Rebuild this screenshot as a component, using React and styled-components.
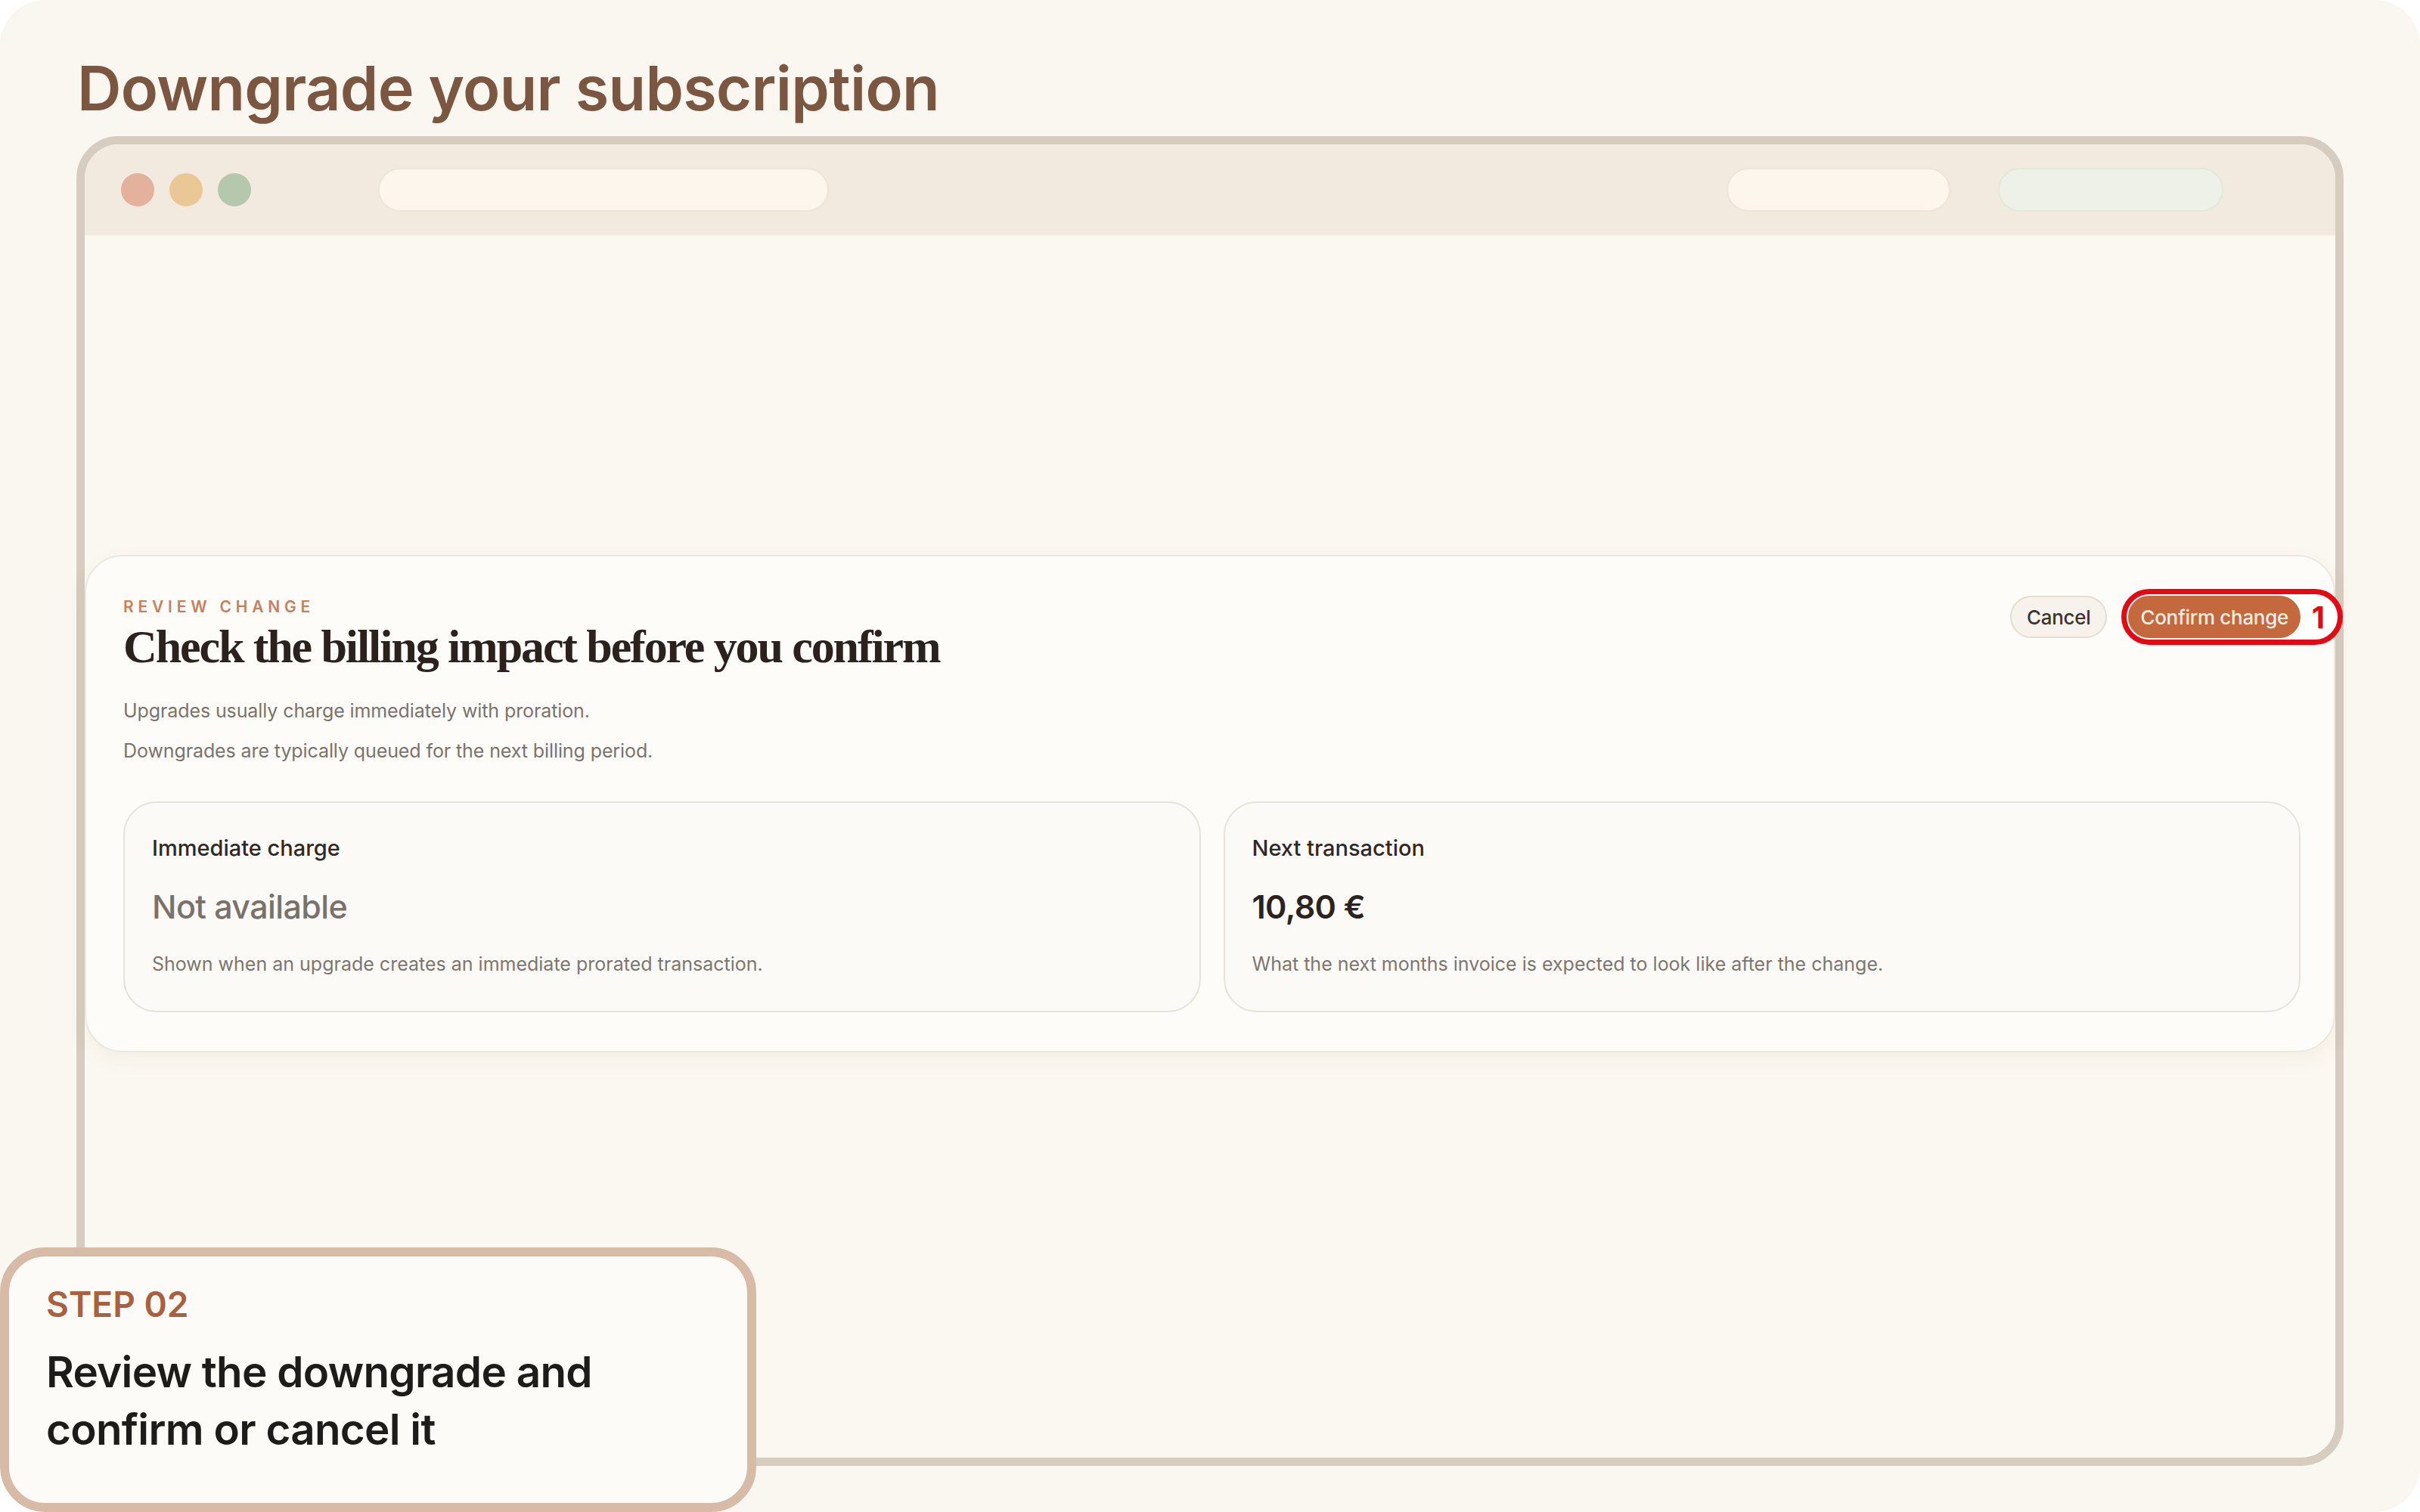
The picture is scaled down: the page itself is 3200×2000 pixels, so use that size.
import styled, { createGlobalStyle } from 'styled-components';

const GlobalStyle = createGlobalStyle`
  html, body {
    margin: 0;
    padding: 0;
    background: #ffffff;
  }
  body {
    font-family: Inter, "Noto Sans", "Liberation Sans", sans-serif;
  }
  * {
    box-sizing: border-box;
  }
`

const Page = styled.div`
  position: relative;
  width: 3200px;
  height: 2000px;
  border-radius: 60px;
  background: #faf7f0;
  overflow: hidden;
  padding: 77px 101px 0 101px;
`

const PageTitle = styled.h1`
  margin: 0 0 0 1px;
  font-size: 81px;
  line-height: 81px;
  font-weight: 600;
  letter-spacing: -0.7px;
  color: #7b5741;
`

const BrowserFrame = styled.div`
  margin-top: 22px;
  height: 1759px;
  border: 11px solid #d6ccbf;
  border-radius: 56px;
  background: #fbf8f1;
  display: flex;
  flex-direction: column;
`

const Toolbar = styled.div`
  flex: none;
  height: 120px;
  border-radius: 45px 45px 0 0;
  background: #f3eadf;
  display: flex;
  align-items: center;
  padding: 0 148px 0 48px;
`

const Dots = styled.div`
  display: flex;
  gap: 20px;
`

const Dot = styled.span`
  width: 44px;
  height: 44px;
  border-radius: 50%;
  background: ${p => p.color};
`

const Pill = styled.div`
  width: ${p => p.width}px;
  height: 58px;
  border-radius: 29px;
  background: ${p => (p.green ? '#eef1e7' : '#fdf6ec')};
  border: 2px solid ${p => (p.green ? '#e1e9da' : '#efe4d7')};
`

const UrlPill = styled(Pill)`
  margin-left: 168px;
`

const Spacer = styled.div`
  flex: 1;
`

const ToolbarActions = styled.div`
  display: flex;
  gap: 63px;
`

const Viewport = styled.div`
  flex: 1;
  padding-top: 423px;
`

const ReviewCard = styled.section`
  background: #fdfcf9;
  border: 2px solid #ece7df;
  border-radius: 50px;
  box-shadow: 0 10px 28px rgba(120, 96, 70, 0.06);
  padding: 55px 44px 51px 49px;
`

const CardHeader = styled.div`
  display: flex;
  justify-content: space-between;
  align-items: flex-start;
`

const Eyebrow = styled.div`
  font-size: 21px;
  line-height: 24px;
  font-weight: 600;
  letter-spacing: 5.8px;
  color: #c7805a;
`

const Heading = styled.h2`
  margin: 3px 0 0 0;
  font-family: "Liberation Serif", "DejaVu Serif", serif;
  font-size: 62px;
  line-height: 74px;
  font-weight: 700;
  letter-spacing: -2.1px;
  color: #2b211d;
`

const Note = styled.p`
  margin: ${p => (p.first ? '30px' : '17px')} 0 0 0;
  font-size: 25px;
  line-height: 36px;
  letter-spacing: -0.1px;
  color: #7a736c;
`

const Actions = styled.div`
  display: flex;
  align-items: center;
  gap: 28px;
  margin-top: -3px;
`

const Button = styled.button`
  position: relative;
  z-index: 1;
  height: 56px;
  padding: 0 ${p => (p.primary ? '14px' : '20px')};
  border-radius: 28px;
  font-family: inherit;
  font-size: 26px;
  font-weight: 500;
  letter-spacing: -0.3px;
  border: 2px solid ${p => (p.primary ? '#c4683d' : '#e4ddd2')};
  background: ${p => (p.primary ? '#c4683d' : '#f7f3ec')};
  color: ${p => (p.primary ? '#fbeee4' : '#3b3430')};
`

const Marked = styled.div`
  position: relative;
  display: flex;
`

const Annotation = styled.div`
  position: absolute;
  z-index: 0;
  top: -9px;
  bottom: -9px;
  left: -9px;
  right: -56px;
  border: 7px solid #e50914;
  border-radius: 40px;
  background: #ffffff;
  display: flex;
  align-items: center;
  justify-content: flex-end;
  padding-right: 17px;
  font-size: 40px;
  font-weight: 700;
  color: #e50914;
`

const Summary = styled.div`
  display: grid;
  grid-template-columns: 1fr 1fr;
  gap: 30px;
  margin-top: 49px;
`

const SummaryCard = styled.div`
  display: flex;
  flex-direction: column;
  background: #fcfaf6;
  border: 2px solid #e8e2d8;
  border-radius: 44px;
  padding: 42px 36px 45px 36px;
`

const SummaryLabel = styled.div`
  font-size: 29px;
  line-height: 36px;
  font-weight: 500;
  letter-spacing: 0;
  color: #2f2926;
`

const SummaryValue = styled.div`
  margin-top: 35px;
  font-size: 43px;
  line-height: 48px;
  font-weight: ${p => (p.muted ? 500 : 600)};
  letter-spacing: -0.6px;
  color: ${p => (p.muted ? '#7a716a' : '#2a2320')};
`

const SummaryHint = styled.div`
  margin-top: 35px;
  font-size: 25px;
  line-height: 34px;
  letter-spacing: 0;
  color: #7d766f;
`

const StepCallout = styled.div`
  position: absolute;
  left: 0;
  bottom: 0;
  width: 1000px;
  height: 350px;
  border: 12px solid #d8bba6;
  border-radius: 60px;
  background: #fdfbf7;
  padding: 35px 40px 0 49px;
`

const StepNumber = styled.div`
  font-size: 46px;
  line-height: 56px;
  font-weight: 600;
  color: #a8603f;
`

const StepText = styled.div`
  margin-top: 24px;
  font-size: 56.5px;
  line-height: 76px;
  font-weight: 600;
  letter-spacing: -0.7px;
  color: #1e1c1a;
`

export default function App() {
  return (
    <>
      <GlobalStyle />
      <Page>
        <PageTitle>Downgrade your subscription</PageTitle>
        <BrowserFrame>
          <Toolbar>
            <Dots>
              <Dot color="#e4b19c" />
              <Dot color="#eac896" />
              <Dot color="#b5c8ae" />
            </Dots>
            <UrlPill width={596} />
            <Spacer />
            <ToolbarActions>
              <Pill width={296} />
              <Pill width={298} green />
            </ToolbarActions>
          </Toolbar>
          <Viewport>
            <ReviewCard>
              <CardHeader>
                <div>
                  <Eyebrow>REVIEW CHANGE</Eyebrow>
                  <Heading>Check the billing impact before you confirm</Heading>
                  <Note first>Upgrades usually charge immediately with proration.</Note>
                  <Note>Downgrades are typically queued for the next billing period.</Note>
                </div>
                <Actions>
                  <Button>Cancel</Button>
                  <Marked>
                    <Annotation>1</Annotation>
                    <Button primary>Confirm change</Button>
                  </Marked>
                </Actions>
              </CardHeader>
              <Summary>
                <SummaryCard>
                  <SummaryLabel>Immediate charge</SummaryLabel>
                  <SummaryValue muted>Not available</SummaryValue>
                  <SummaryHint>Shown when an upgrade creates an immediate prorated transaction.</SummaryHint>
                </SummaryCard>
                <SummaryCard>
                  <SummaryLabel>Next transaction</SummaryLabel>
                  <SummaryValue>10,80 €</SummaryValue>
                  <SummaryHint>What the next months invoice is expected to look like after the change.</SummaryHint>
                </SummaryCard>
              </Summary>
            </ReviewCard>
          </Viewport>
        </BrowserFrame>
        <StepCallout>
          <StepNumber>STEP 02</StepNumber>
          <StepText>
            Review the downgrade and
            <br />
            confirm or cancel it
          </StepText>
        </StepCallout>
      </Page>
    </>
  );
}
